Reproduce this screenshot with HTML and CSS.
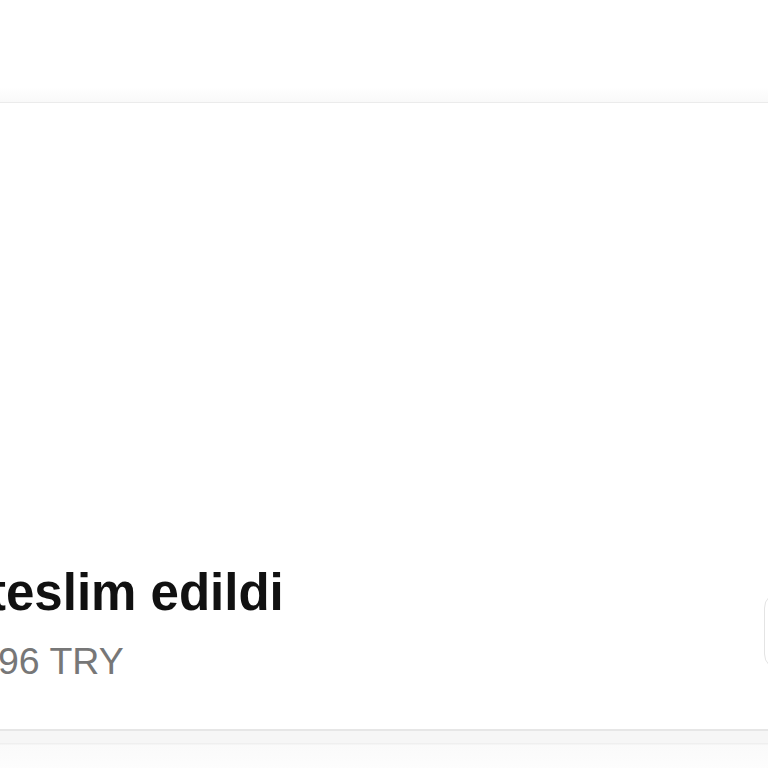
FILE: index.html
```html
<!DOCTYPE html>
<html lang="tr">
<head>
    <meta charset="UTF-8">
    <meta name="viewport" content="width=device-width, initial-scale=1.0">
    <title>Sipariş</title>
    <link rel="stylesheet" href="styles.css">
</head>
<body>
    <div class="top-space"></div>

    <!-- order card -->
    <div class="card">
        <div class="card-body">
            <div class="info">
                <div class="status">teslim edildi</div>
                <div class="price">96 TRY</div>
            </div>
            <div class="action"></div>
        </div>
    </div>

    <div class="below"></div>
</body>
</html>
```

FILE: styles.css
```css
    body {
        margin: 0;
        background: #ffffff;
        font-family: "Liberation Sans", Arial, sans-serif;
        overflow: hidden;
    }

    .top-space {
        height: 102px;
        background: linear-gradient(#ffffff 85%, #f9f9f9);
    }

    .card {
        height: 626px;
        background: #fff;
        border-top: 1px solid #ebebeb;
        border-bottom: 2px solid #e6e6e6;
        display: flex;
        flex-direction: column;
        justify-content: flex-end;
    }

    .card-body {
        display: flex;
        align-items: flex-start;
        padding-bottom: 46px;
    }

    .info {
        flex: 1;
    }

    .status {
        font-size: 51px;
        font-weight: 700;
        color: #111111;
        line-height: 62px;
        margin-left: -11px;
    }

    .price {
        font-size: 37.5px;
        color: #777777;
        line-height: 44px;
        margin-top: 15px;
        margin-left: -2px;
    }

    .action {
        width: 60px;
        height: 78px;
        margin-top: 30px;
        margin-right: -56px;
        border: 1px solid #e4e4e4;
        border-radius: 16px;
        box-sizing: border-box;
    }

    .below {
        height: 40px;
        background: linear-gradient(#f6f6f6 0, #f6f6f6 12px, #efefef 12px, #efefef 13px, #fafafa 14px, #fdfdfd);
    }
```
